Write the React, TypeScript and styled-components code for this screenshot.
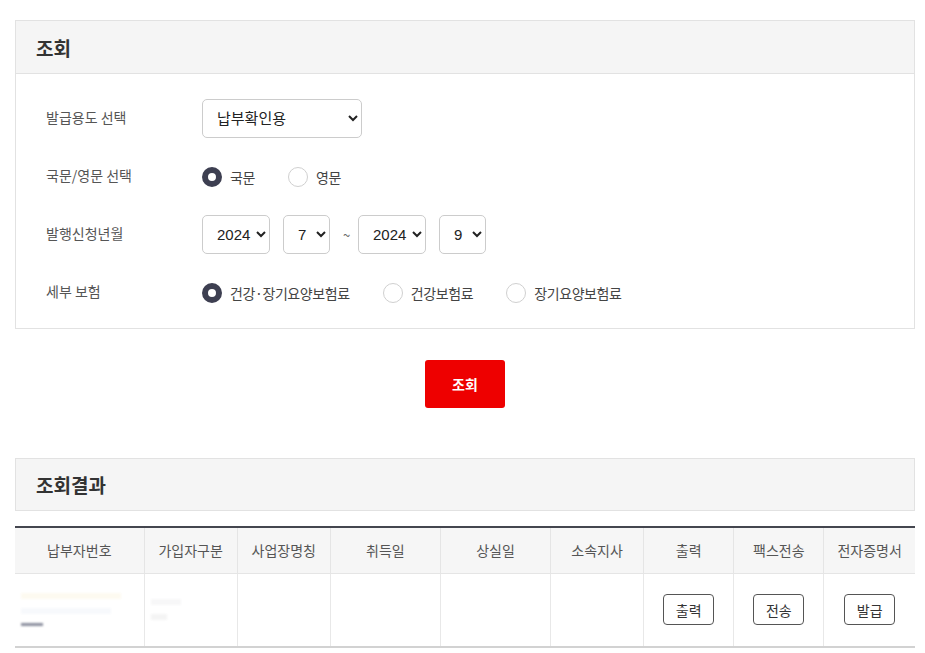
import React, { useState } from "react";
import styled, { createGlobalStyle } from "styled-components";

const GlobalStyle = createGlobalStyle`
    body {
        margin: 0;
        background: #fff;
        font-family: "Noto Sans CJK KR", "Noto Sans", sans-serif;
        color: #333;
    }
    * { box-sizing: border-box; }
`;

type Option = { value: string; label: string };

const purposeOptions: Option[] = [
    { value: "pay", label: "납부확인용" },
    { value: "etc", label: "기타" },
];

const years = ["2023", "2024"];
const months = ["1", "2", "3", "4", "5", "6", "7", "8", "9", "10", "11", "12"];

const columns = [
    { title: "납부자번호", width: 129 },
    { title: "가입자구분", width: 93 },
    { title: "사업장명칭", width: 93 },
    { title: "취득일", width: 110 },
    { title: "상실일", width: 110 },
    { title: "소속지사", width: 93 },
    { title: "출력", width: 90 },
    { title: "팩스전송", width: 90 },
    { title: "전자증명서", width: 91 },
];

const App: React.FC = () => {
    const [lang, setLang] = useState("ko");
    const [kind, setKind] = useState("all");

    return (
        <>
            <GlobalStyle />
            <Page>
                <Panel>
                    <PanelHeader>조회</PanelHeader>
                    <PanelBody>
                        <Row>
                            <Label>발급용도 선택</Label>
                            <Select $width={160} defaultValue="pay">
                                {purposeOptions.map(o => (
                                    <option key={o.value} value={o.value}>{o.label}</option>
                                ))}
                            </Select>
                        </Row>
                        <Row>
                            <Label>국문/영문 선택</Label>
                            <RadioGroup>
                                <Radio name="lang" value="ko" checked={lang === "ko"} onChange={setLang} label="국문" />
                                <Radio name="lang" value="en" checked={lang === "en"} onChange={setLang} label="영문" />
                            </RadioGroup>
                        </Row>
                        <Row>
                            <Label>발행신청년월</Label>
                            <DateGroup>
                                <Select $width={68} defaultValue="2024">
                                    {years.map(y => <option key={y}>{y}</option>)}
                                </Select>
                                <Select $width={47} defaultValue="7">
                                    {months.map(m => <option key={m}>{m}</option>)}
                                </Select>
                                <Tilde>~</Tilde>
                                <Select $width={68} defaultValue="2024">
                                    {years.map(y => <option key={y}>{y}</option>)}
                                </Select>
                                <Select $width={47} defaultValue="9">
                                    {months.map(m => <option key={m}>{m}</option>)}
                                </Select>
                            </DateGroup>
                        </Row>
                        <Row>
                            <Label>세부 보험</Label>
                            <RadioGroup>
                                <Radio name="kind" value="all" checked={kind === "all"} onChange={setKind} label="건강·장기요양보험료" />
                                <Radio name="kind" value="health" checked={kind === "health"} onChange={setKind} label="건강보험료" />
                                <Radio name="kind" value="care" checked={kind === "care"} onChange={setKind} label="장기요양보험료" />
                            </RadioGroup>
                        </Row>
                    </PanelBody>
                </Panel>

                <ButtonArea>
                    <SearchButton>조회</SearchButton>
                </ButtonArea>

                <ResultHeader>조회결과</ResultHeader>

                <Table>
                    <colgroup>
                        {columns.map(c => <col key={c.title} style={{ width: c.width }} />)}
                    </colgroup>
                    <thead>
                        <tr>
                            {columns.map(c => <Th key={c.title}>{c.title}</Th>)}
                        </tr>
                    </thead>
                    <tbody>
                        <tr>
                            <Td>
                                <Blurred>
                                    <Smudge $w={100} $c="#fdfaf0" />
                                    <Smudge $w={90} $c="#f7f9fc" />
                                    <Smudge $w={22} $c="#8b8f9e" $h={3} />
                                </Blurred>
                            </Td>
                            <Td>
                                <Blurred>
                                    <Smudge $w={30} $c="#f7f7f8" />
                                    <Smudge $w={16} $c="#f4f4f4" />
                                </Blurred>
                            </Td>
                            <Td />
                            <Td />
                            <Td />
                            <Td />
                            <Td><SmallButton>출력</SmallButton></Td>
                            <Td><SmallButton>전송</SmallButton></Td>
                            <Td><SmallButton>발급</SmallButton></Td>
                        </tr>
                    </tbody>
                </Table>
            </Page>
        </>
    );
};

type RadioProps = {
    name: string;
    value: string;
    checked: boolean;
    label: string;
    onChange: (v: string) => void;
};

const Radio: React.FC<RadioProps> = ({ name, value, checked, label, onChange }) => (
    <RadioLabel>
        <HiddenInput type="radio" name={name} value={value} checked={checked} onChange={() => onChange(value)} />
        <RadioCircle $checked={checked} />
        <span>{label}</span>
    </RadioLabel>
);

const Page = styled.div`
    width: 900px;
    margin: 20px 0 0 15px;
`;

const Panel = styled.section`
    border: 1px solid #e2e2e2;
`;

const PanelHeader = styled.h2`
    margin: 0;
    height: 53px;
    padding: 0 20px;
    display: flex;
    align-items: center;
    background: #f5f5f5;
    border-bottom: 1px solid #e2e2e2;
    font-size: 19px;
    font-weight: 700;
    color: #333;
`;

const PanelBody = styled.div`
    padding: 25px 30px 16px;
    display: flex;
    flex-direction: column;
    gap: 19px;
`;

const Row = styled.div`
    display: flex;
    align-items: center;
    height: 39px;
`;

const Label = styled.div`
    width: 156px;
    font-size: 14px;
    color: #555;
    margin-top: -3px;
`;

const Select = styled.select<{ $width: number }>`
    width: ${p => p.$width}px;
    height: 39px;
    padding: 0 0 0 10px;
    border: 1px solid #ccc;
    border-radius: 5px;
    background: #fff;
    font-family: "Liberation Sans", "Noto Sans CJK KR", sans-serif;
    font-size: 15px;
    color: #222;
`;

const DateGroup = styled.div`
    display: flex;
    align-items: center;
    gap: 13px;
`;

const Tilde = styled.span`
    font-size: 13px;
    color: #666;
    width: 2px;
    text-align: center;
`;

const RadioGroup = styled.div`
    display: flex;
    align-items: center;
    gap: 33px;
`;

const RadioLabel = styled.label`
    display: flex;
    align-items: center;
    gap: 8px;
    font-size: 14px;
    letter-spacing: -0.4px;
    color: #444;
    cursor: pointer;
`;

const HiddenInput = styled.input`
    display: none;
`;

const RadioCircle = styled.span<{ $checked: boolean }>`
    width: 20px;
    height: 20px;
    border-radius: 50%;
    background: #fff;
    border: ${p => (p.$checked ? "6px solid #3d3f51" : "1px solid #d0d0d0")};
`;

const ButtonArea = styled.div`
    display: flex;
    justify-content: center;
    padding: 31px 0 50px;
`;

const SearchButton = styled.button`
    width: 80px;
    height: 48px;
    border: none;
    border-radius: 3px;
    background: #ee0000;
    color: #fff;
    font-family: "Noto Sans CJK KR", "Noto Sans", sans-serif;
    font-size: 14px;
    font-weight: 700;
`;

const ResultHeader = styled(PanelHeader)`
    border: 1px solid #e2e2e2;
    height: 53px;
    margin-bottom: 15px;
`;

const Table = styled.table`
    width: 100%;
    border-collapse: collapse;
    table-layout: fixed;
    border-top: 2px solid #44464f;
    border-bottom: 2px solid #d2d2d2;
`;

const Th = styled.th`
    height: 46px;
    background: #f6f6f6;
    font-size: 14px;
    font-weight: 400;
    color: #555;
    border-left: 1px solid #e5e5e5;
    border-bottom: 1px solid #e5e5e5;
    &:first-child { border-left: none; }
`;

const Td = styled.td`
    height: 74px;
    text-align: center;
    border-left: 1px solid #e8e8e8;
    &:first-child { border-left: none; }
`;

const Blurred = styled.div`
    display: flex;
    flex-direction: column;
    gap: 9px;
    padding-left: 5px;
    filter: blur(1px);
`;

const Smudge = styled.span<{ $w: number; $c: string; $h?: number }>`
    display: block;
    width: ${p => p.$w}px;
    height: ${p => p.$h ?? 6}px;
    background: ${p => p.$c};
`;

const SmallButton = styled.button`
    width: 51px;
    height: 31px;
    border: 1px solid #555;
    border-radius: 4px;
    background: #fff;
    font-family: "Noto Sans CJK KR", "Noto Sans", sans-serif;
    font-size: 14px;
    color: #333;
`;

export default App;
